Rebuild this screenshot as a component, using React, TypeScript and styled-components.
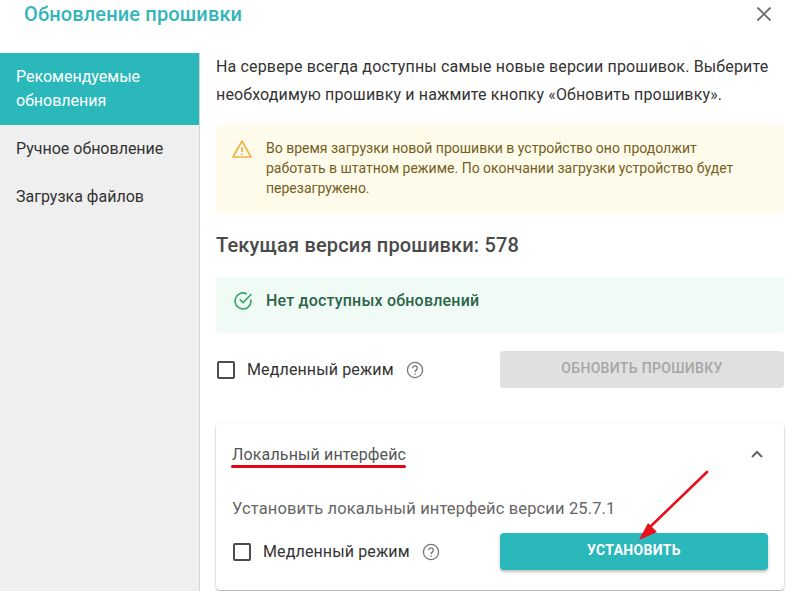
import React from "react";
import styled, { createGlobalStyle } from "styled-components";

const teal = "#2ab8bb";

const GlobalStyle = createGlobalStyle`
  html, body {
    margin: 0;
    padding: 0;
    background: #fff;
    overflow: hidden;
  }
  * {
    box-sizing: border-box;
  }
  body {
    font-family: Roboto, "Liberation Sans", sans-serif;
    color: #333;
  }
`;

const Page = styled.div`
  position: relative;
  width: 792px;
  height: 591px;
  overflow: hidden;
`;

const Header = styled.header`
  height: 53px;
  padding: 0 18px 26px 24px;
  display: flex;
  align-items: center;
  justify-content: space-between;
`;

const Title = styled.h1`
  margin: 0;
  font-size: 20px;
  font-weight: 500;
  letter-spacing: 0.15px;
  color: #35b5b9;
`;

const CloseButton = styled.button`
  width: 20px;
  height: 20px;
  padding: 0;
  border: 0;
  background: none;
  color: #6f6f6f;
  display: flex;
  align-items: center;
  justify-content: center;
`;

const Body = styled.div`
  display: flex;
  height: 538px;
`;

const Sidebar = styled.nav`
  width: 200px;
  flex-shrink: 0;
  background: #efefef;
  border-right: 1px solid #d4d4d4;
`;

const NavItem = styled.div<{ $active?: boolean }>`
  padding: 12px 16px;
  font-size: 16px;
  line-height: 24px;
  color: ${(p) => (p.$active ? "#fff" : "#333")};
  background: ${(p) => (p.$active ? teal : "transparent")};
`;

const Content = styled.main`
  flex: 1;
  padding: 0 8px 0 16px;
`;

const Intro = styled.p`
  margin: 0;
  font-size: 16px;
  line-height: 28px;
  letter-spacing: 0.15px;
  color: #333;
  height: 72px;
  white-space: nowrap;
`;

const Notice = styled.div<{ $tone: "warning" | "success" }>`
  display: flex;
  align-items: flex-start;
  gap: ${(p) => (p.$tone === "warning" ? "14px" : "13px")};
  border-radius: 4px;
  padding: ${(p) => (p.$tone === "warning" ? "13px 16px 15px" : "14px 17px 0")};
  height: ${(p) => (p.$tone === "warning" ? "88px" : "56px")};
  background: ${(p) => (p.$tone === "warning" ? "#fffbea" : "#f0fbf6")};
`;

const WarningIcon = styled.svg`
  flex-shrink: 0;
  margin-top: 1px;
`;

const NoticeText = styled.div`
  font-size: 14px;
  line-height: 20px;
  color: #73601f;
  white-space: nowrap;
`;

const SuccessText = styled.div`
  font-size: 16px;
  line-height: 20px;
  font-weight: 500;
  letter-spacing: 0.2px;
  color: #2c6349;
`;

const Version = styled.h2`
  margin: 0;
  height: 64px;
  display: flex;
  align-items: center;
  font-size: 20px;
  font-weight: 500;
  letter-spacing: 0.17px;
  color: #4a4a4a;
`;

const ActionRow = styled.div`
  display: flex;
  align-items: center;
  justify-content: space-between;
  margin-top: 18px;
`;

const CheckLabel = styled.label`
  display: flex;
  align-items: center;
  font-size: 16px;
  letter-spacing: 0.13px;
  color: #333;
`;

const CheckBox = styled.span`
  width: 18px;
  height: 18px;
  margin: 0 12px 0 1px;
  border: 2px solid #4d4d4d;
  border-radius: 2px;
`;

const HelpIcon = styled.span`
  display: flex;
  margin-left: 12px;
  color: #757575;
`;

const ActionButton = styled.button<{ $disabled?: boolean }>`
  height: 37px;
  padding: 0 0 3px;
  border: 0;
  border-radius: 4px;
  font-family: inherit;
  font-size: 14px;
  font-weight: ${(p) => (p.$disabled ? 500 : 700)};
  letter-spacing: 0.33px;
  text-transform: uppercase;
  color: ${(p) => (p.$disabled ? "#a6a6a6" : "#fff")};
  background: ${(p) => (p.$disabled ? "#e0e0e0" : teal)};
  box-shadow: ${(p) => (p.$disabled ? "none" : "0 2px 3px rgba(0, 0, 0, 0.25)")};
  width: ${(p) => (p.$disabled ? "284px" : "268px")};
`;

const Card = styled.section`
  margin-top: 35px;
  height: 167px;
  padding: 0 16px;
  background: #fff;
  border-radius: 4px;
  box-shadow: 0 1px 2px rgba(0, 0, 0, 0.35), 0 0 2px rgba(0, 0, 0, 0.06);
`;

const CardHeader = styled.div`
  height: 62px;
  padding-right: 3px;
  display: flex;
  align-items: center;
  justify-content: space-between;
`;

const CardTitle = styled.div`
  position: relative;
  font-size: 16px;
  letter-spacing: 0.15px;
  color: #555;
  &::after {
    content: "";
    position: absolute;
    left: -1px;
    right: 0;
    bottom: -4px;
    height: 3px;
    border-radius: 2px;
    background: #e30613;
  }
`;

const CardText = styled.div`
  margin-top: 12px;
  font-size: 16.5px;
  line-height: 24px;
  letter-spacing: 0.13px;
  color: #666;
`;

const CardRow = styled(ActionRow)`
  margin-top: 12px;
`;

const Arrow = styled.svg`
  position: absolute;
  left: 630px;
  top: 461px;
`;

const Help = () => (
  <HelpIcon>
    <svg width="18" height="18" viewBox="0 0 18 18" fill="none" stroke="currentColor">
      <circle cx="9" cy="9" r="7.6" strokeWidth="1.3" />
      <path d="M6.7 7.2a2.3 2.3 0 1 1 3.6 1.9c-.8.5-1.3 1-1.3 1.9" strokeWidth="1.3" />
      <circle cx="9" cy="13" r=".8" fill="currentColor" stroke="none" />
    </svg>
  </HelpIcon>
);

const SlowMode = () => (
  <CheckLabel>
    <CheckBox />
    Медленный режим
    <Help />
  </CheckLabel>
);

export default function App() {
  return (
    <Page>
      <GlobalStyle />
      <Header>
        <Title>Обновление прошивки</Title>
        <CloseButton>
          <svg width="16" height="16" viewBox="0 0 16 16" stroke="currentColor" strokeWidth="1.9">
            <path d="M1.5 1.5l13 13M14.5 1.5l-13 13" />
          </svg>
        </CloseButton>
      </Header>
      <Body>
        <Sidebar>
          <NavItem $active>
            Рекомендуемые
            <br />
            обновления
          </NavItem>
          <NavItem>Ручное обновление</NavItem>
          <NavItem>Загрузка файлов</NavItem>
        </Sidebar>
        <Content>
          <Intro>
            На сервере всегда доступны самые новые версии прошивок. Выберите
            <br />
            необходимую прошивку и нажмите кнопку «Обновить прошивку».
          </Intro>
          <Notice $tone="warning">
            <WarningIcon width="20" height="20" viewBox="0 0 20 20" fill="none" stroke="#f2b046" strokeWidth="1.7">
              <path d="M10 2.2L19 18H1L10 2.2Z" strokeLinejoin="round" />
              <path d="M10 8v5M10 14.2v1.6" />
            </WarningIcon>
            <NoticeText>
              Во время загрузки новой прошивки в устройство оно продолжит
              <br />
              работать в штатном режиме. По окончании загрузки устройство будет
              <br />
              перезагружено.
            </NoticeText>
          </Notice>
          <Version>Текущая версия прошивки: 578</Version>
          <Notice $tone="success">
            <svg width="20" height="20" viewBox="0 0 20 20" fill="none" stroke="#3aa76d" strokeWidth="1.7" strokeLinecap="round" strokeLinejoin="round">
              <path d="M18 9.2V10a8 8 0 1 1-4.7-7.3" />
              <path d="M18 3.5L10 11.6 7.3 8.9" />
            </svg>
            <SuccessText>Нет доступных обновлений</SuccessText>
          </Notice>
          <ActionRow>
            <SlowMode />
            <ActionButton $disabled>Обновить прошивку</ActionButton>
          </ActionRow>
          <Card>
            <CardHeader>
              <CardTitle>Локальный интерфейс</CardTitle>
              <svg width="16" height="16" viewBox="0 0 16 16" fill="none" stroke="#666" strokeWidth="2">
                <path d="M3 11l5-5 5 5" />
              </svg>
            </CardHeader>
            <CardText>Установить локальный интерфейс версии 25.7.1</CardText>
            <CardRow>
              <SlowMode />
              <ActionButton>Установить</ActionButton>
            </CardRow>
          </Card>
        </Content>
      </Body>
      <Arrow width="90" height="90" viewBox="0 0 90 90" fill="none">
        <path d="M77 11L20 66" stroke="#e8101a" strokeWidth="2.6" strokeLinecap="round" />
        <path d="M9 79L18 62L27 71Z" fill="#e8101a" />
      </Arrow>
    </Page>
  );
}
